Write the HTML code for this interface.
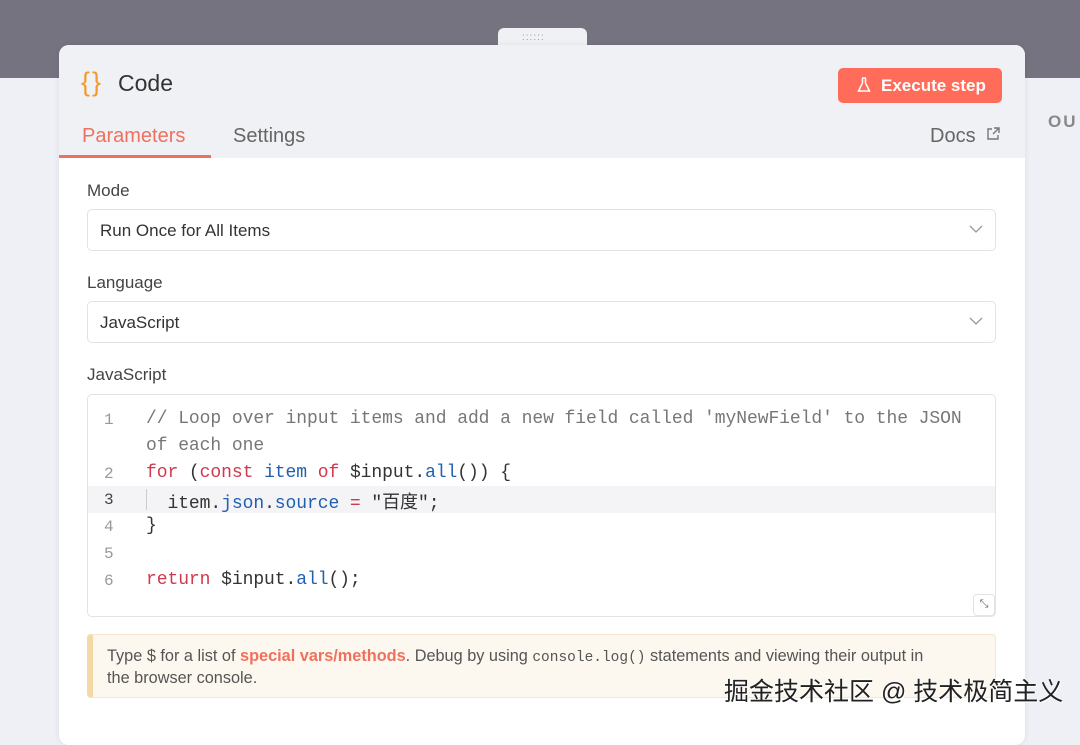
<!DOCTYPE html>
<html><head><meta charset="utf-8"><style>
*{box-sizing:border-box;margin:0;padding:0}
body{width:1080px;height:721px;overflow:hidden;background:#eef0f6;font-family:"Liberation Sans","Noto Sans CJK SC",sans-serif;position:relative}
.top{position:absolute;left:0;top:0;width:1080px;height:78px;background:#74737f}
.abs{position:absolute}
.panel{position:absolute;left:59px;top:45px;width:966px;height:700px;background:#fff;border-radius:10px;overflow:hidden;box-shadow:0 0 6px rgba(0,0,0,.08)}
.head{position:absolute;left:0;top:0;width:966px;height:113px;background:#f0f1f5}
.lbl{position:absolute;font-size:17px;color:#444}
.sel{position:absolute;left:28px;width:909px;height:42px;border:1px solid #e2e3e8;border-radius:5px;font-size:17px;color:#333;padding:11px 12px}
.chev{position:absolute;right:12px;top:14px}
.code{position:absolute;left:28px;top:349px;width:909px;height:223px;border:1px solid #e2e3e8;border-radius:5px;font-family:"Liberation Mono","Noto Sans CJK SC",monospace;font-size:18px;letter-spacing:-0.07px;color:#333}
.ln{position:absolute;left:16px;width:14px;color:#999;font-size:16px}
.cl{position:absolute;left:58px;white-space:pre}
.k{color:#d0384d}.b{color:#2160b0}
</style></head><body>
<div class="top"></div>
<div class="abs" style="left:1048px;top:112px;font-size:17px;color:#888;font-weight:bold;letter-spacing:2px">OU</div>
<div class="abs" style="left:498px;top:28px;width:89px;height:22px;background:#f0f1f5;border-radius:6px 6px 0 0"></div>
<div class="abs" style="left:522px;top:35px;font-size:10px;color:#999;letter-spacing:1px;line-height:5px">::::::</div>
<div class="panel">
 <div class="head"></div>
 <div class="abs" style="left:22px;top:22px;font-size:27px;color:#f29a2e;letter-spacing:2px">{}</div>
 <div class="abs" style="left:59px;top:25px;font-size:23px;color:#333">Code</div>
 <div class="abs" style="left:779px;top:23px;width:164px;height:35px;background:#ff6d5a;border-radius:5px;color:#fff;font-size:17px;font-weight:bold;padding:8px 0 0 43px">Execute step</div>
 <svg class="abs" style="left:798px;top:32px" width="14" height="16" viewBox="0 0 14 16"><path d="M5 1h4M5.5 1v5L1.5 14h11L8.5 6V1" fill="none" stroke="#fff" stroke-width="1.5"/></svg>
 <div class="abs" style="left:23px;top:80px;font-size:20px;color:#f0705e">Parameters</div>
 <div class="abs" style="left:0;top:110px;width:152px;height:3px;background:#f0705e"></div>
 <div class="abs" style="left:174px;top:80px;font-size:20px;color:#666">Settings</div>
 <div class="abs" style="left:871px;top:80px;font-size:20px;color:#666">Docs</div>
 <svg class="abs" style="left:927px;top:82px" width="14" height="14" viewBox="0 0 14 14"><path d="M6 2H2v10h10V8M8 1h5v5M13 1L7 7" fill="none" stroke="#777" stroke-width="1.4"/></svg>
 <div class="lbl" style="left:28px;top:136px">Mode</div>
 <div class="sel" style="top:164px">Run Once for All Items<svg class="chev" width="14" height="10" viewBox="0 0 14 10"><path d="M1 2l6 6 6-6" fill="none" stroke="#999" stroke-width="1.3"/></svg></div>
 <div class="lbl" style="left:28px;top:228px">Language</div>
 <div class="sel" style="top:256px">JavaScript<svg class="chev" width="14" height="10" viewBox="0 0 14 10"><path d="M1 2l6 6 6-6" fill="none" stroke="#999" stroke-width="1.3"/></svg></div>
 <div class="lbl" style="left:28px;top:320px">JavaScript</div>
 <div class="code">
  <div class="abs" style="left:0;top:91px;width:907px;height:27px;background:#f4f4f6"></div>
  <div class="abs" style="left:58px;top:94px;width:1px;height:21px;background:#ccc"></div>
  <div class="ln" style="top:16px">1</div><div class="cl" style="top:14px;color:#777">// Loop over input items and add a new field called 'myNewField' to the JSON</div>
  <div class="cl" style="top:41px;color:#777">of each one</div>
  <div class="ln" style="top:70px">2</div><div class="cl" style="top:68px"><span class="k">for</span> (<span class="k">const</span> <span class="b">item</span> <span class="k">of</span> $input.<span class="b">all</span>()) {</div>
  <div class="ln" style="top:96px;color:#444">3</div><div class="cl" style="top:93px">  item.<span class="b">json</span>.<span class="b">source</span> <span class="k">=</span> "百度";</div>
  <div class="ln" style="top:123px">4</div><div class="cl" style="top:121px">}</div>
  <div class="ln" style="top:150px">5</div>
  <div class="ln" style="top:177px">6</div><div class="cl" style="top:175px"><span class="k">return</span> $input.<span class="b">all</span>();</div>
  <div class="abs" style="right:0;bottom:0;width:22px;height:22px;border:1px solid #e2e3e8;border-radius:4px;font-size:11px;color:#666;text-align:center;line-height:20px">⤡</div>
 </div>
 <div class="abs" style="left:28px;top:589px;width:909px;height:64px;background:#fdf8ef;border:1px solid #f5e6cc;border-left:6px solid #f3d9a6;border-radius:4px;padding:11px 14px;font-size:16.3px;color:#555;line-height:20px;white-space:nowrap">Type $ for a list of <span style="color:#f0705e;font-weight:bold">special vars/methods</span>. Debug by using <span style="font-family:'Liberation Mono',monospace;font-size:14.5px">console.log()</span> statements and viewing their output in<br>the browser console.</div>
</div>
<div class="abs" style="left:724px;top:672px;font-size:25px;color:#222;text-shadow:0 0 2px #fff,1px 1px 0 #fff">掘金技术社区 @ 技术极简主义</div>
</body></html>
